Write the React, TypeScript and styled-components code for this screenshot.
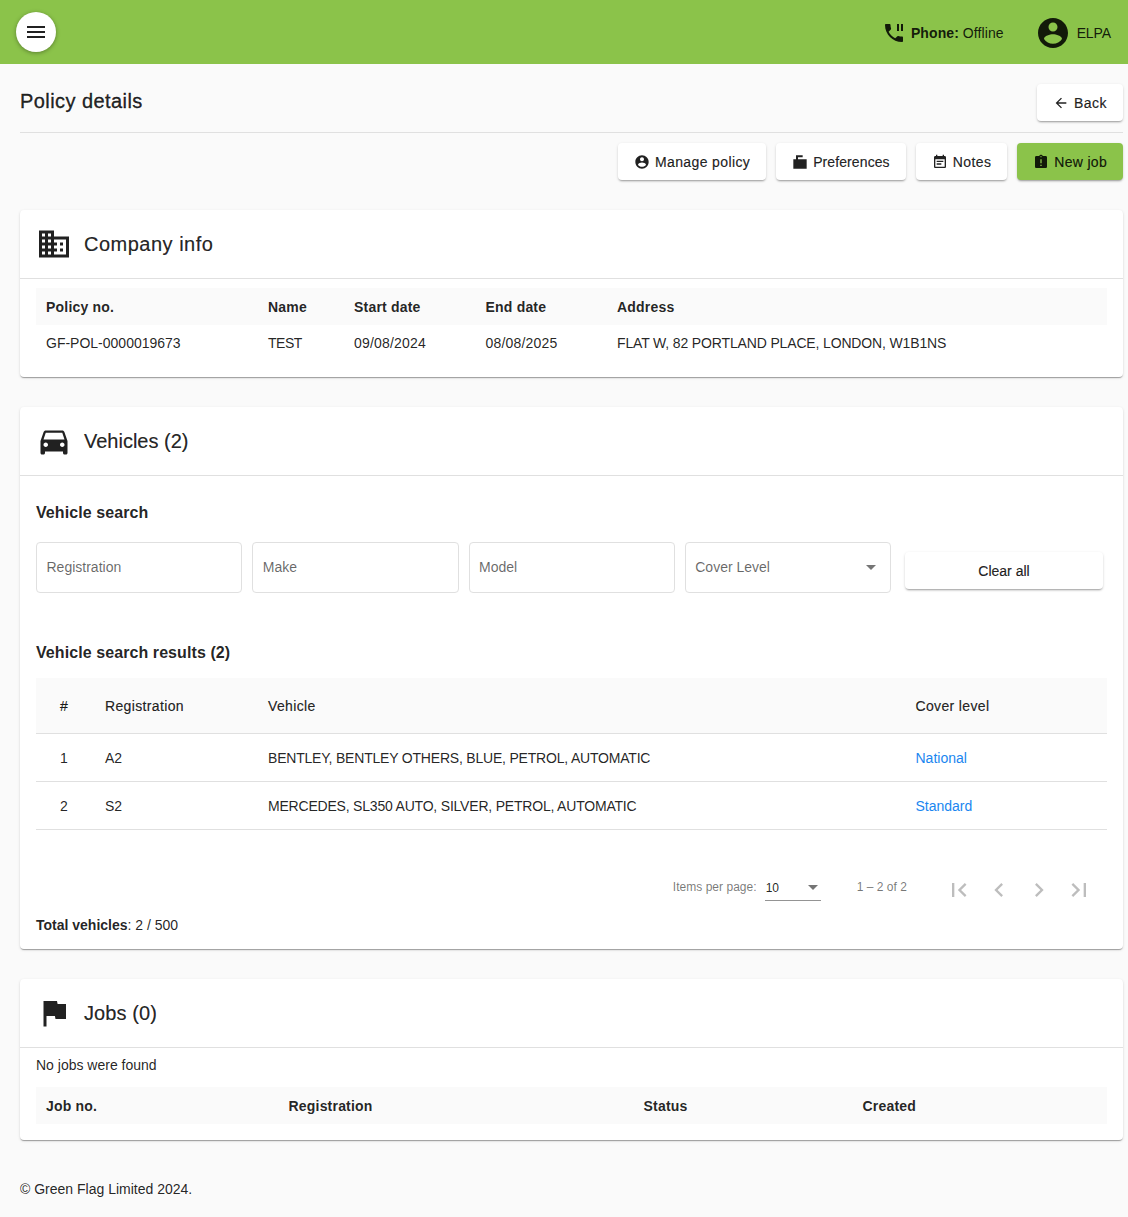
import React from 'react';
import styled, { createGlobalStyle } from 'styled-components';

const paths = {
  menu: 'M3 18h18v-2H3v2zm0-5h18v-2H3v2zm0-7v2h18V6H3z',
  phonePaused:
    'M17 3h-2v7h2V3zm3 12.5c-1.25 0-2.45-.2-3.57-.57-.35-.11-.74-.03-1.02.24l-2.2 2.2c-2.83-1.44-5.15-3.75-6.59-6.59l2.2-2.21c.28-.26.36-.65.25-1C8.7 6.45 8.5 5.25 8.5 4c0-.55-.45-1-1-1H4c-.55 0-1 .45-1 1 0 9.39 7.61 17 17 17 .55 0 1-.45 1-1v-3.5c0-.55-.45-1-1-1zM19 3v7h2V3h-2z',
  account:
    'M12 2C6.48 2 2 6.48 2 12s4.48 10 10 10 10-4.48 10-10S17.52 2 12 2zm0 3c1.66 0 3 1.34 3 3s-1.34 3-3 3-3-1.34-3-3 1.34-3 3-3zm0 14.2c-2.5 0-4.71-1.28-6-3.22.03-1.99 4-3.08 6-3.08 1.99 0 5.97 1.09 6 3.08-1.29 1.94-3.5 3.22-6 3.22z',
  back: 'M20 11H7.83l5.59-5.59L12 4l-8 8 8 8 1.41-1.41L7.83 13H20v-2z',
  prefs: 'M2 22V8h4V2h10v3H9v3h13v14H2z',
  note:
    'M17 10H7v2h10v-2zm2-7h-1V1h-2v2H8V1H6v2H5c-1.11 0-1.99.9-1.99 2L3 19c0 1.1.89 2 2 2h14c1.1 0 2-.9 2-2V5c0-1.1-.9-2-2-2zm0 16H5V8h14v11zm-5-5H7v2h7v-2z',
  job:
    'M19 3h-4.18C14.4 1.84 13.3 1 12 1c-1.3 0-2.4.84-2.82 2H5c-1.1 0-2 .9-2 2v14c0 1.1.9 2 2 2h14c1.1 0 2-.9 2-2V5c0-1.1-.9-2-2-2zm-6 15h-2v-2h2v2zm0-4h-2V8h2v6zm-1-9c-.55 0-1-.45-1-1s.45-1 1-1 1 .45 1 1-.45 1-1 1z',
  business:
    'M12 7V3H2v18h20V7H12zM6 19H4v-2h2v2zm0-4H4v-2h2v2zm0-4H4V9h2v2zm0-4H4V5h2v2zm4 12H8v-2h2v2zm0-4H8v-2h2v2zm0-4H8V9h2v2zm0-4H8V5h2v2zm10 12h-8v-2h2v-2h-2v-2h2v-2h-2V9h8v10zm-2-8h-2v2h2v-2zm0 4h-2v2h2v-2z',
  car:
    'M18.92 6.01C18.72 5.42 18.16 5 17.5 5h-11c-.66 0-1.21.42-1.42 1.01L3 12v8c0 .55.45 1 1 1h1c.55 0 1-.45 1-1v-1h12v1c0 .55.45 1 1 1h1c.55 0 1-.45 1-1v-8l-2.08-5.99zM6.5 16c-.83 0-1.5-.67-1.5-1.5S5.67 13 6.5 13s1.5.67 1.5 1.5S7.33 16 6.5 16zm11 0c-.83 0-1.5-.67-1.5-1.5s.67-1.5 1.5-1.5 1.5.67 1.5 1.5-.67 1.5-1.5 1.5zM5 11l1.5-4.5h11L19 11H5z',
  flag: 'M14.4 6L14 4H5v17h2v-7h5.6l.4 2h7V6z',
  first: 'M18.41 16.59L13.82 12l4.59-4.59L17 6l-6 6 6 6zM6 6h2v12H6z',
  prev: 'M15.41 7.41L14 6l-6 6 6 6 1.41-1.41L10.83 12z',
  next: 'M10 6L8.59 7.41 13.17 12l-4.58 4.59L10 18l6-6z',
  last: 'M5.59 7.41L10.18 12l-4.59 4.59L7 18l6-6-6-6zM16 6h2v12h-2z',
};

const GlobalStyle = createGlobalStyle`
  html, body {
    margin: 0;
    padding: 0;
    background: #fafafa;
    color: rgba(0, 0, 0, 0.87);
    font-family: "Liberation Sans", Arial, sans-serif;
    font-size: 14px;
  }
`;

const Svg = styled.svg<{ $size: number }>`
  width: ${p => p.$size}px;
  height: ${p => p.$size}px;
  fill: currentColor;
  flex: none;
  display: block;
`;

const Icon = ({ d, size = 24 }: { d: string; size?: number }) => (
  <Svg $size={size} viewBox="0 0 24 24">
    <path d={d} />
  </Svg>
);

const Page = styled.div`
  width: 1128px;
  height: 1217px;
  overflow: hidden;
`;

const TopBar = styled.header`
  height: 64px;
  background: #8bc34a;
  display: flex;
  align-items: center;
  justify-content: space-between;
  padding: 0 17px 0 16px;
  color: rgba(0, 0, 0, 0.87);
`;

const MenuButton = styled.button`
  width: 40px;
  height: 40px;
  border: 0;
  border-radius: 50%;
  background: #fff;
  color: rgba(0, 0, 0, 0.87);
  padding: 8px;
  box-shadow: 0 1px 4px rgba(0, 0, 0, 0.35);
`;

const BarRight = styled.div`
  display: flex;
  align-items: center;
  margin-top: 1px;
`;

const PhoneStatus = styled.div`
  display: flex;
  align-items: center;
  gap: 5px;
  margin-right: 31px;
  letter-spacing: 0.08px;
`;

const UserName = styled.div`
  display: flex;
  align-items: center;
  gap: 6px;
  letter-spacing: -0.1px;
`;

const Strong = styled.b`
  font-weight: 700;
`;

const Content = styled.main`
  padding: 0 5px 0 20px;
`;

const TitleRow = styled.div`
  height: 48px;
  display: flex;
  align-items: flex-start;
  justify-content: space-between;
  padding-top: 20px;
  border-bottom: 1px solid #e0e0e0;
`;

const PageTitle = styled.h1`
  margin: 3px 0 0;
  font-size: 20px;
  font-weight: 500;
  line-height: 28px;
  letter-spacing: 0.43px;
  -webkit-text-stroke: 0.35px currentColor;
`;

const ActionRow = styled.div`
  display: flex;
  justify-content: flex-end;
  gap: 10px;
  padding-top: 10px;
  margin-bottom: 30px;
`;

const Button = styled.button<{ $primary?: boolean; $track?: number }>`
  height: 37px;
  display: flex;
  align-items: center;
  justify-content: center;
  gap: 5px;
  padding: 0 16px;
  border: 0;
  border-radius: 4px;
  background: ${p => (p.$primary ? '#8bc34a' : '#fff')};
  color: rgba(0, 0, 0, 0.87);
  font: 14px "Liberation Sans", Arial, sans-serif;
  letter-spacing: ${p => p.$track ?? 0}px;
  -webkit-text-stroke: 0.2px currentColor;
  box-shadow: 0 2px 2px -1px rgba(0, 0, 0, 0.3), 0 1px 3px rgba(0, 0, 0, 0.14);
`;

const ClearButton = styled(Button)`
  width: 198px;
  margin-top: 6px;
  justify-self: end;
`;

const Card = styled.section`
  background: #fff;
  border-radius: 4px;
  box-shadow: 0 2px 1px -1px rgba(0, 0, 0, 0.2), 0 1px 1px rgba(0, 0, 0, 0.14),
    0 1px 3px rgba(0, 0, 0, 0.12);
  margin-bottom: 30px;
`;

const CardHeader = styled.div<{ $track: number }>`
  height: 68px;
  display: flex;
  align-items: center;
  gap: 12px;
  padding: 0 16px;
  border-bottom: 1px solid #e0e0e0;
  font-size: 20px;
  letter-spacing: ${p => p.$track}px;
  -webkit-text-stroke: 0.2px currentColor;
`;

const CardBody = styled.div<{ $pad: string }>`
  padding: ${p => p.$pad};
`;

const HeadGrid = styled.div<{ $cols: string }>`
  display: grid;
  grid-template-columns: ${p => p.$cols};
  height: 37px;
  align-items: center;
  background: #fafafa;
  padding-left: 10px;
  font-weight: 700;
  letter-spacing: 0.2px;
`;

const InfoRow = styled.div<{ $cols: string }>`
  display: grid;
  grid-template-columns: ${p => p.$cols};
  height: 36px;
  align-items: center;
  padding-left: 10px;
`;

const InfoCell = styled.span<{ $track?: number }>`
  letter-spacing: ${p => p.$track ?? 0}px;
`;

const SectionTitle = styled.h3<{ $gap: number }>`
  margin: 0 0 ${p => p.$gap}px;
  font-size: 16px;
  line-height: 20px;
  font-weight: 700;
  letter-spacing: 0.08px;
`;

const SearchRow = styled.div`
  display: grid;
  grid-template-columns: repeat(4, 206.25px) 202px;
  column-gap: 10px;
  align-items: center;
  margin-bottom: 50px;
`;

const Field = styled.div`
  height: 48px;
  min-width: 0;
  box-sizing: content-box;
  border: 1px solid #e0e0e0;
  border-radius: 4px;
  display: flex;
  align-items: center;
  justify-content: space-between;
  padding: 0 14px 1px 9.5px;
  color: rgba(0, 0, 0, 0.6);
`;

const Caret = styled.span<{ $color: string }>`
  width: 0;
  height: 0;
  border-left: 5px solid transparent;
  border-right: 5px solid transparent;
  border-top: 5px solid ${p => p.$color};
`;

const Table = styled.table`
  width: 100%;
  border-collapse: collapse;
  table-layout: fixed;
`;

const Th = styled.th<{ $w?: number }>`
  width: ${p => (p.$w ? `${p.$w}px` : 'auto')};
  height: 55px;
  padding: 0;
  background: #fafafa;
  font-weight: 500;
  text-align: left;
  border-bottom: 1px solid #e0e0e0;
  letter-spacing: 0.35px;
  -webkit-text-stroke: 0.2px currentColor;
`;

const Td = styled.td<{ $track?: number }>`
  height: 47px;
  padding: 0;
  border-bottom: 1px solid #e0e0e0;
  letter-spacing: ${p => p.$track ?? 0}px;
`;

const IndexCell = styled.span`
  display: block;
  width: 56px;
  text-align: center;
`;

const Link = styled.a`
  color: #1a86f0;
`;

const Paginator = styled.div`
  display: flex;
  align-items: center;
  justify-content: flex-end;
  height: 54px;
  margin-top: 32px;
  padding-right: 14.5px;
  font-size: 12px;
  color: rgba(0, 0, 0, 0.54);
`;

const PagerText = styled.span`
  margin-bottom: 4px;
  letter-spacing: 0.03px;
`;

const PageSize = styled.div`
  width: 56px;
  height: 24px;
  margin: 0 36px 0 8px;
  display: flex;
  align-items: center;
  justify-content: space-between;
  padding: 0 3px 2px 1px;
  box-sizing: border-box;
  border-bottom: 1px solid rgba(0, 0, 0, 0.42);
  color: rgba(0, 0, 0, 0.87);
`;

const PageButtons = styled.div`
  display: flex;
  margin: 2px 0 0 37.5px;
  gap: 12px;
  color: rgba(0, 0, 0, 0.26);
`;

const Total = styled.div`
  margin-top: 1px;
  line-height: 16px;
`;

const NoJobs = styled.div`
  line-height: 16px;
  margin-bottom: 14px;
`;

const Footer = styled.footer`
  padding-top: 9px;
  line-height: 20px;
`;

const policyCols = '222px 86px 131.5px 131.5px 1fr';
const jobCols = '242.5px 355px 219px 1fr';

const vehicles = [
  { id: 1, reg: 'A2', desc: 'BENTLEY, BENTLEY OTHERS, BLUE, PETROL, AUTOMATIC', cover: 'National' },
  { id: 2, reg: 'S2', desc: 'MERCEDES, SL350 AUTO, SILVER, PETROL, AUTOMATIC', cover: 'Standard' },
];

const App: React.FC = () => (
  <Page>
    <GlobalStyle />
    <TopBar>
      <MenuButton>
        <Icon d={paths.menu} />
      </MenuButton>
      <BarRight>
        <PhoneStatus>
          <Icon d={paths.phonePaused} />
          <span>
            <Strong>Phone:</Strong> Offline
          </span>
        </PhoneStatus>
        <UserName>
          <Icon d={paths.account} size={36} />
          <span>ELPA</span>
        </UserName>
      </BarRight>
    </TopBar>

    <Content>
      <TitleRow>
        <PageTitle>Policy details</PageTitle>
        <Button $track={0.5}>
          <Icon d={paths.back} size={16} />
          Back
        </Button>
      </TitleRow>

      <ActionRow>
        <Button $track={0.38}>
          <Icon d={paths.account} size={16} />
          Manage policy
        </Button>
        <Button $track={0.1}>
          <Icon d={paths.prefs} size={16} />
          Preferences
        </Button>
        <Button $track={0.4}>
          <Icon d={paths.note} size={16} />
          Notes
        </Button>
        <Button $primary $track={0.3}>
          <Icon d={paths.job} size={16} />
          New job
        </Button>
      </ActionRow>

      <Card>
        <CardHeader $track={0.5}>
          <Icon d={paths.business} size={36} />
          Company info
        </CardHeader>
        <CardBody $pad="9px 16px 16px">
          <HeadGrid $cols={policyCols}>
            <span>Policy no.</span>
            <span>Name</span>
            <span>Start date</span>
            <span>End date</span>
            <span>Address</span>
          </HeadGrid>
          <InfoRow $cols={policyCols}>
            <InfoCell>GF-POL-0000019673</InfoCell>
            <InfoCell $track={-0.5}>TEST</InfoCell>
            <InfoCell $track={0.2}>09/08/2024</InfoCell>
            <InfoCell $track={0.2}>08/08/2025</InfoCell>
            <InfoCell $track={-0.15}>FLAT W, 82 PORTLAND PLACE, LONDON, W1B1NS</InfoCell>
          </InfoRow>
        </CardBody>
      </Card>

      <Card>
        <CardHeader $track={0}>
          <Icon d={paths.car} size={36} />
          Vehicles (2)
        </CardHeader>
        <CardBody $pad="27px 16px 16px">
          <SectionTitle $gap={19}>Vehicle search</SectionTitle>
          <SearchRow>
            <Field>Registration</Field>
            <Field>Make</Field>
            <Field>Model</Field>
            <Field>
              Cover Level
              <Caret $color="rgba(0, 0, 0, 0.54)" />
            </Field>
            <ClearButton>Clear all</ClearButton>
          </SearchRow>
          <SectionTitle $gap={15}>Vehicle search results (2)</SectionTitle>
          <Table>
            <thead>
              <tr>
                <Th $w={69}>
                  <IndexCell>#</IndexCell>
                </Th>
                <Th $w={163}>Registration</Th>
                <Th $w={647.5}>Vehicle</Th>
                <Th>Cover level</Th>
              </tr>
            </thead>
            <tbody>
              {vehicles.map(v => (
                <tr key={v.id}>
                  <Td>
                    <IndexCell>{v.id}</IndexCell>
                  </Td>
                  <Td>{v.reg}</Td>
                  <Td $track={-0.2}>{v.desc}</Td>
                  <Td>
                    <Link>{v.cover}</Link>
                  </Td>
                </tr>
              ))}
            </tbody>
          </Table>
          <Paginator>
            <PagerText>Items per page:</PagerText>
            <PageSize>
              10
              <Caret $color="rgba(0, 0, 0, 0.54)" />
            </PageSize>
            <PagerText>1 – 2 of 2</PagerText>
            <PageButtons>
              <Icon d={paths.first} size={28} />
              <Icon d={paths.prev} size={28} />
              <Icon d={paths.next} size={28} />
              <Icon d={paths.last} size={28} />
            </PageButtons>
          </Paginator>
          <Total>
            <Strong>Total vehicles</Strong>: 2 / 500
          </Total>
        </CardBody>
      </Card>

      <Card>
        <CardHeader $track={0.1}>
          <Icon d={paths.flag} size={36} />
          Jobs (0)
        </CardHeader>
        <CardBody $pad="9px 16px 16px">
          <NoJobs>No jobs were found</NoJobs>
          <HeadGrid $cols={jobCols}>
            <span>Job no.</span>
            <span>Registration</span>
            <span>Status</span>
            <span>Created</span>
          </HeadGrid>
        </CardBody>
      </Card>

      <Footer>© Green Flag Limited 2024.</Footer>
    </Content>
  </Page>
);

export default App;
